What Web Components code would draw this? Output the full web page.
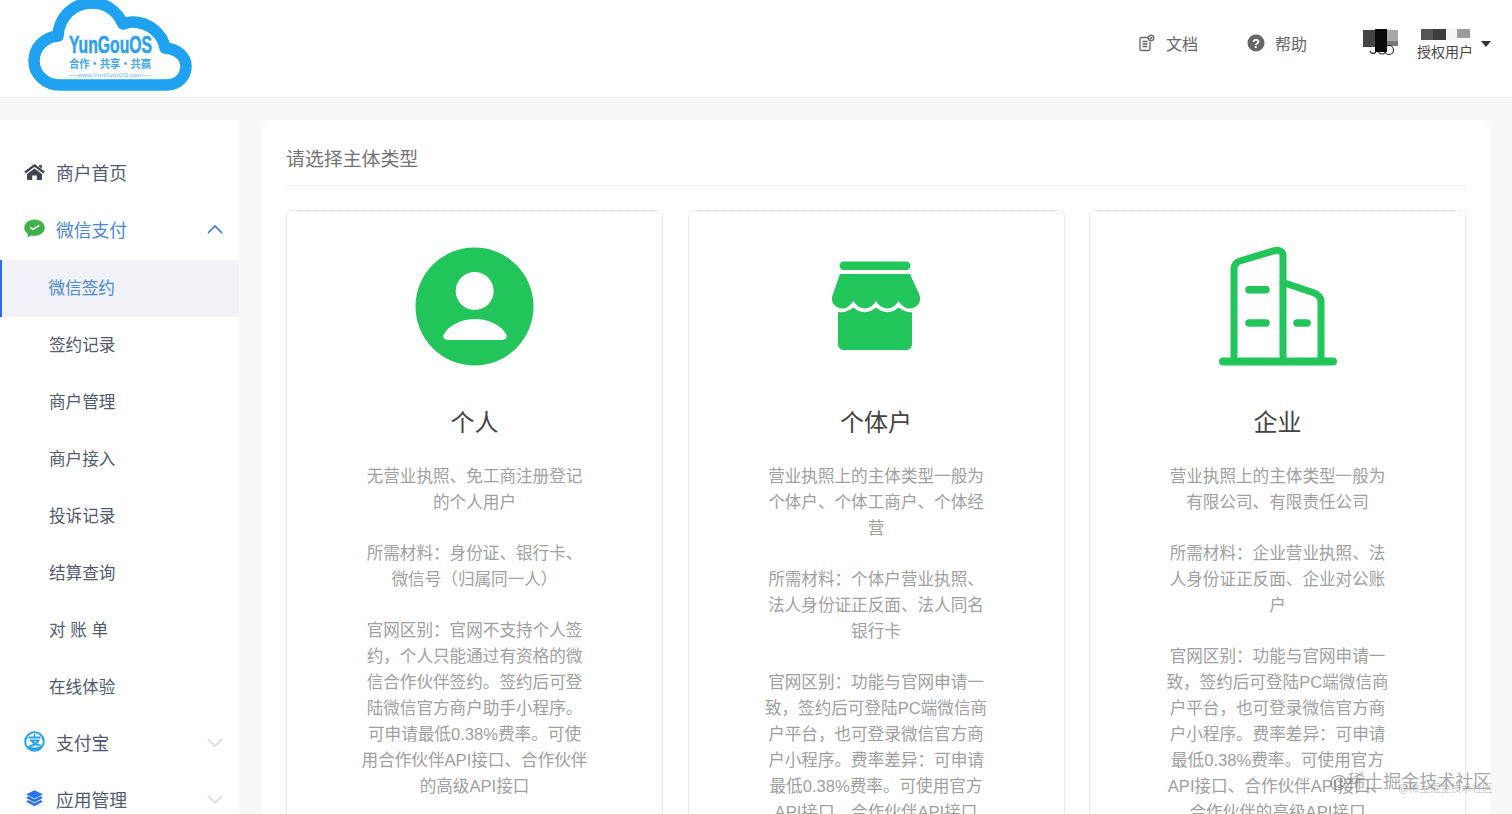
<!DOCTYPE html>
<html lang="zh"><head><meta charset="utf-8"><title>主体类型</title>
<style>
html,body{margin:0;height:814px;overflow:hidden;background:#f8f8f9}
body{font-family:"Liberation Sans","Noto Sans CJK SC",sans-serif}
</style></head><body>
<app-shell>
  <top-bar slot="top"></top-bar>
  <side-nav slot="side">
    <nav-item label="商户首页" icon="home"></nav-item>
    <nav-item label="微信支付" icon="wechat" open active></nav-item>
    <nav-sub selected>微信签约</nav-sub>
    <nav-sub>签约记录</nav-sub>
    <nav-sub>商户管理</nav-sub>
    <nav-sub>商户接入</nav-sub>
    <nav-sub>投诉记录</nav-sub>
    <nav-sub>结算查询</nav-sub>
    <nav-sub>对 账 单</nav-sub>
    <nav-sub>在线体验</nav-sub>
    <nav-item label="支付宝" icon="alipay" closed></nav-item>
    <nav-item label="应用管理" icon="layers" closed></nav-item>
  </side-nav>
  <type-panel>
    <type-card heading="个人" icon="person">
      <p>无营业执照、免工商注册登记<br>的个人用户</p>
      <p>所需材料：身份证、银行卡、<br>微信号（归属同一人）</p>
      <p>官网区别：官网不支持个人签<br>约，个人只能通过有资格的微<br>信合作伙伴签约。签约后可登<br>陆微信官方商户助手小程序。<br>可申请最低0.38%费率。可使<br>用合作伙伴API接口、合作伙伴<br>的高级API接口</p>
    </type-card>
    <type-card heading="个体户" icon="shop">
      <p>营业执照上的主体类型一般为<br>个体户、个体工商户、个体经<br>营</p>
      <p>所需材料：个体户营业执照、<br>法人身份证正反面、法人同名<br>银行卡</p>
      <p>官网区别：功能与官网申请一<br>致，签约后可登陆PC端微信商<br>户平台，也可登录微信官方商<br>户小程序。费率差异：可申请<br>最低0.38%费率。可使用官方<br>API接口、合作伙伴API接口</p>
    </type-card>
    <type-card heading="企业" icon="building">
      <p>营业执照上的主体类型一般为<br>有限公司、有限责任公司</p>
      <p>所需材料：企业营业执照、法<br>人身份证正反面、企业对公账<br>户</p>
      <p>官网区别：功能与官网申请一<br>致，签约后可登陆PC端微信商<br>户平台，也可登录微信官方商<br>户小程序。费率差异：可申请<br>最低0.38%费率。可使用官方<br>API接口、合作伙伴API接口、<br>合作伙伴的高级API接口</p>
    </type-card>
  </type-panel>
  <water-mark slot="over"></water-mark>
</app-shell>
<script>
function def(name, css, html){
  customElements.define(name, class extends HTMLElement{
    constructor(){super();this.attachShadow({mode:'open'});}
    connectedCallback(){
      const h = typeof html==='function'?html(this):html;
      this.shadowRoot.innerHTML='<style>'+css+'</style>'+h;
    }
  });
}
const ICONS={
 home:'<svg width="21" height="16" viewBox="0 0 21 16"><path fill="#3f4650" d="M15 1h2.800v3.700L15 2.500z"/><path fill="none" stroke="#3f4650" stroke-width="2.400" stroke-linejoin="round" d="M1 8.500 10.500 1.400 20 8.500"/><path fill="#3f4650" d="M10.500 4.400 18 10v5c0 .6-.4 1-1 1h-4.200v-4.500H8.200V16H4c-.6 0-1-.4-1-1v-5z"/></svg>',
 wechat:'<svg width="21" height="20" viewBox="0 0 21 20"><path fill="#3fb14a" d="M10.500 .6C4.900.6.300 4.200.300 8.700c0 2.500 1.400 4.700 3.700 6.200l-.5 3.700 3.600-2.200c1 .3 2.200.4 3.400.4 5.600 0 10.200-3.600 10.200-8.100S16.100.6 10.500.6z"/><path fill="none" stroke="#fff" stroke-width="1.600" stroke-linecap="round" d="m6.500 8.600 2.300 1.700 6-3.400"/></svg>',
 alipay:'<svg width="21" height="21" viewBox="0 0 21 21"><circle cx="10.500" cy="10.500" r="9.300" fill="#fff" stroke="#26a4ea" stroke-width="2"/><path fill="#26a4ea" d="M2.300 14.500c2.800 1.300 5.500 2 8.200 2s5.400-.7 8.200-2c-1.500 3.400-4.600 5.300-8.200 5.300s-6.700-1.900-8.200-5.300z"/><path fill="none" stroke="#26a4ea" stroke-width="1.900" stroke-linecap="round" d="M5.200 6.500h10.600M10.500 4v2.500M6.500 9.500h8c-1.300 3-4.300 4.700-8.500 5.500M7.800 10c1.500 2.300 4.300 3.700 8.500 4.500"/></svg>',
 layers:'<svg width="21" height="17" viewBox="0 0 21 17"><g fill="#2b74ef"><path d="M10.500 .2 18.800 4.300 10.500 8.800 2.200 4.300z"/><path d="M4.300 6.100 2.200 8l8.300 4.400L18.800 8l-2.100-1.900-6.200 3.400z"/><path d="M4.300 9.900 2.200 11.800l8.300 4.500 8.300-4.500-2.100-1.900-6.200 3.400z"/></g></svg>',
 person:'<svg width="120" height="120" viewBox="0 0 120 120"><circle cx="59.500" cy="59.500" r="59" fill="#22c55a"/><circle cx="59.700" cy="44" r="19" fill="#fff"/><path fill="#fff" d="M34 93c-5 0-7-3-5-6 5-9 18-15 31-15s26 6 31 15c2 3 0 6-5 6z"/></svg>',
 shop:'<svg width="130" height="120" viewBox="0 0 130 120"><rect x="30.500" y="16.500" width="71" height="8.500" rx="4.200" fill="#22c55a"/><path fill="#22c55a" d="M29 58h74v41c0 3.500-2.500 6-6 6H35c-3.500 0-6-2.500-6-6z"/><path fill="#22c55a" stroke="#fff" stroke-width="7.500" paint-order="stroke" d="M31 29h70l9 20c1.500 3.500 1.500 7-.5 10-2.500 3.500-7.500 5.500-11.500 4-3.500-1-6.500-4-8.500-7-2.500 4.500-6.500 7.500-11.200 7.500-4.500 0-8.800-3-11.300-7.500-2.500 4.500-6.500 7.500-11.200 7.500-4.500 0-8.800-3-11.300-7.500-2 3-5 6-8.500 7-4 1.500-9 -.5-11.500-4-2-3-2-6.500-.5-10z"/></svg>',
 building:'<svg width="150" height="140" viewBox="0 0 150 140"><g fill="none" stroke="#22c55a" stroke-linecap="round" stroke-linejoin="round"><path stroke-width="7" d="M29 126V34c0-4 2.500-7 6-8l35-10.500c4.500-1.300 8 1.500 8 5V126"/><path stroke-width="7" d="M78 47.500l30 10c5 1.800 8 4.500 8 9V126"/><path stroke-width="8" d="M18 126.500h110"/><path stroke-width="7.500" d="M44 54.800h17M44 88h17M92 88h10"/></g></svg>'
};

def('app-shell',`:host{display:grid;grid-template-columns:239px 1fr;grid-template-rows:98px 1fr;height:814px;overflow:hidden;position:relative}
 .top{grid-column:1/3}
 .side{padding-top:22px;min-height:0;overflow:hidden}
 .main{padding:22px 22px 0 23px;min-height:0;overflow:hidden}`,
 `<div class="top"><slot name="top"></slot></div><div class="side"><slot name="side"></slot></div><div class="main"><slot></slot></div><slot name="over"></slot>`);

def('top-bar',`:host{display:flex;align-items:center;height:97px;background:#fff;border-bottom:1px solid #eeeeef;color:#666;font-size:16px;position:relative;overflow:hidden}
 .logo{margin-left:20px;flex:none;display:block}
 .sp{flex:1}
 .link{display:flex;align-items:center;margin-right:49px;position:relative;top:-6px}
 .link svg{margin-right:11px;display:block}
 .link.help{margin-right:55px}
 .link.help svg{margin-right:10px}
 .avatar{display:block;margin-right:19px;position:relative;top:-6px}
 .user{position:relative;width:57px;margin-right:7px;top:-4px}
 .user svg{display:block;margin:0 0 3px 4px}
 .user span{font-size:14px;line-height:16px;color:#444;display:block;white-space:nowrap}
 .caret{width:0;height:0;border:5px solid transparent;border-top:6px solid #333;border-bottom:0;margin-right:21px;position:relative;top:-5px}`,
 `<svg class="logo" width="180" height="97" viewBox="20 0 180 97">
   <path fill="#fff" stroke="#1fa2f2" stroke-width="11.500" stroke-linejoin="round" d="M60 85C45 85 34 74 34 61c0-13 10-24 24-25C59 17 73 3 92 3c14 0 25 8 31 21 3-1 6-2 9-2 18 0 31 13 33 26 13 1 21 9 21 18 0 11-8 19-20 19z"/>
   <text x="69" y="53" textLength="83" lengthAdjust="spacingAndGlyphs" font-family="Liberation Sans" font-weight="700" font-size="23" fill="#2aa1ee" stroke="#2aa1ee" stroke-width=".5">YunGouOS</text>
   <text x="69" y="68" textLength="82" lengthAdjust="spacingAndGlyphs" font-family="Noto Sans CJK SC" font-weight="700" font-size="11.500" fill="#45aaee">合作·共享·共赢</text>
   <text x="69" y="76.500" textLength="82" lengthAdjust="spacingAndGlyphs" font-family="Liberation Sans" font-size="5" fill="#62b8f0">~~www.YunGouOS.com~~</text>
  </svg>
  <div class="sp"></div>
  <div class="link"><svg width="17" height="18" viewBox="0 0 17 18"><g fill="none" stroke="#666" stroke-width="1.300"><path d="M10 3.500H3.500c-.8 0-1.500.7-1.500 1.500v10c0 .8.700 1.500 1.500 1.500h7c.8 0 1.500-.7 1.500-1.500V8"/><path d="M4.500 7.500h5M4.500 10h5M4.500 12.500h5"/><circle cx="13" cy="4" r="2.800"/><path d="m11.800 4 1 1 1.500-1.800"/></g></svg>文档</div>
  <div class="link help"><svg width="18" height="18" viewBox="0 0 18 18"><circle cx="9" cy="9" r="8.500" fill="#666"/><text x="9" y="13.500" text-anchor="middle" font-family="Liberation Sans" font-weight="700" font-size="13" fill="#fff">?</text></svg>帮助</div>
  <svg class="avatar" width="36" height="27" viewBox="0 0 36 27"><rect x="1" y="1" width="12" height="17" fill="#444"/><rect x="25" y="1" width="11" height="11" fill="#aaa"/><rect x="25" y="12" width="11" height="5" fill="#777"/><circle cx="20" cy="21" r="4" fill="none" stroke="#222" stroke-width="1.100"/><circle cx="27" cy="21" r="4.500" fill="none" stroke="#222" stroke-width="1.100"/><path d="M8 22c1 3 4 3 6 1" fill="none" stroke="#222" stroke-width="1.100"/><rect x="13" y="0" width="12" height="23" fill="#0a0a0a"/></svg>
  <div class="user"><svg width="50" height="12" viewBox="0 0 50 12"><rect x="0" y="0" width="25" height="11" fill="#555"/><rect x="12" y="0" width="13" height="11" fill="#3c3c3c"/><rect x="36" y="0" width="13" height="9" fill="#9a9a9a"/><rect x="25" y="0" width="11" height="11" fill="#f4f4f4"/></svg><span>授权用户</span></div>
  <div class="caret"></div>`);

def('side-nav',`:host{display:block;background:#fff;padding-top:26px;height:100%;border-radius:0 4px 0 0;color:#515a6e}`,`<slot></slot>`);

def('nav-item',`:host{display:flex;align-items:center;height:57px;box-sizing:border-box;padding:0 0 6px 24px;font-size:17.800px;color:#515a6e;position:relative}
 :host([active]){color:#4a86d9}
 .i{width:21px;height:21px;display:flex;align-items:center;justify-content:center;margin-right:11px;flex:none}
 .i svg{display:block}
 .c{position:absolute;left:207px;top:50%;margin-top:-7px}`,
 el=>{
  const c=el.hasAttribute('open')?'<svg class="c" width="16" height="9" viewBox="0 0 16 9"><path d="m1 8 7-7 7 7" fill="none" stroke="#2f6fd0" stroke-width="1.500"/></svg>':
   el.hasAttribute('closed')?'<svg class="c" width="16" height="9" viewBox="0 0 16 9"><path d="m1 1 7 7 7-7" fill="none" stroke="#d6d8dc" stroke-width="1.500"/></svg>':'';
  return `<span class="i">${ICONS[el.getAttribute('icon')]}</span><span>${el.getAttribute('label')}</span>${c}`;
 });

def('nav-sub',`:host{display:flex;align-items:center;height:57px;padding:0 0 4px 49px;font-size:16.600px;color:#515a6e;white-space:pre;box-sizing:border-box}
 :host([selected]){background:#f0f2f7;color:#4a86d9;border-left:2.500px solid #2d6cf0;padding-left:46.500px}`,`<slot></slot>`);

def('type-panel',`:host{display:block;background:#fff;border-radius:10px 10px 0 0;padding:0 23px 0 24px;height:900px;width:1181px}
 h2{margin:0;font-weight:400;font-size:18.900px;color:#737373;height:65px;line-height:79px;border-bottom:1px solid #eceef0}
 .row{display:grid;grid-template-columns:repeat(3,377px);column-gap:24.500px;margin-top:24px}`,
 `<h2>请选择主体类型</h2><div class="row"><slot></slot></div>`);

def('type-card',`:host{display:block;border:1px dotted #d4d6da;border-radius:6px;text-align:center;height:800px;box-sizing:border-box}
 .ic{height:194px;display:flex;justify-content:center;align-items:flex-start;padding-top:36px;box-sizing:border-box;overflow:visible}
 .ic svg{display:block}
 h3{margin:0;font-weight:400;font-size:24px;line-height:36px;color:#444;height:36px}
 .body{margin-top:23px;font-size:16.600px;line-height:26px;color:#a0a0a0}
 ::slotted(p){margin:0 0 25px;white-space:nowrap}`,
 el=>{
  const k=el.getAttribute('icon');
  const t={person:'margin:0',shop:'margin:-2px 0 0 -4px',building:'margin:-12px 0 0 4px'}[k];
  return `<div class="ic"><span style="display:block;height:120px;${t}">${ICONS[k]}</span></div><h3>${el.getAttribute('heading')}</h3><div class="body"><slot></slot></div>`;
 });

def('water-mark',`:host{position:absolute;left:0;top:0;width:1512px;height:814px;pointer-events:none;overflow:hidden;display:block}
 .a{position:absolute;left:1329px;top:770px;font-size:18px;line-height:24px;color:rgba(110,110,110,.62);white-space:nowrap}
 .b{position:absolute;left:1398px;top:781px;font-size:10.500px;line-height:14px;color:rgba(140,140,140,.5);white-space:nowrap}`,
 `<div class="a">@稀土掘金技术社区</div><div class="b">@稀土掘金技术社区</div>`);
</script>
</body></html>
